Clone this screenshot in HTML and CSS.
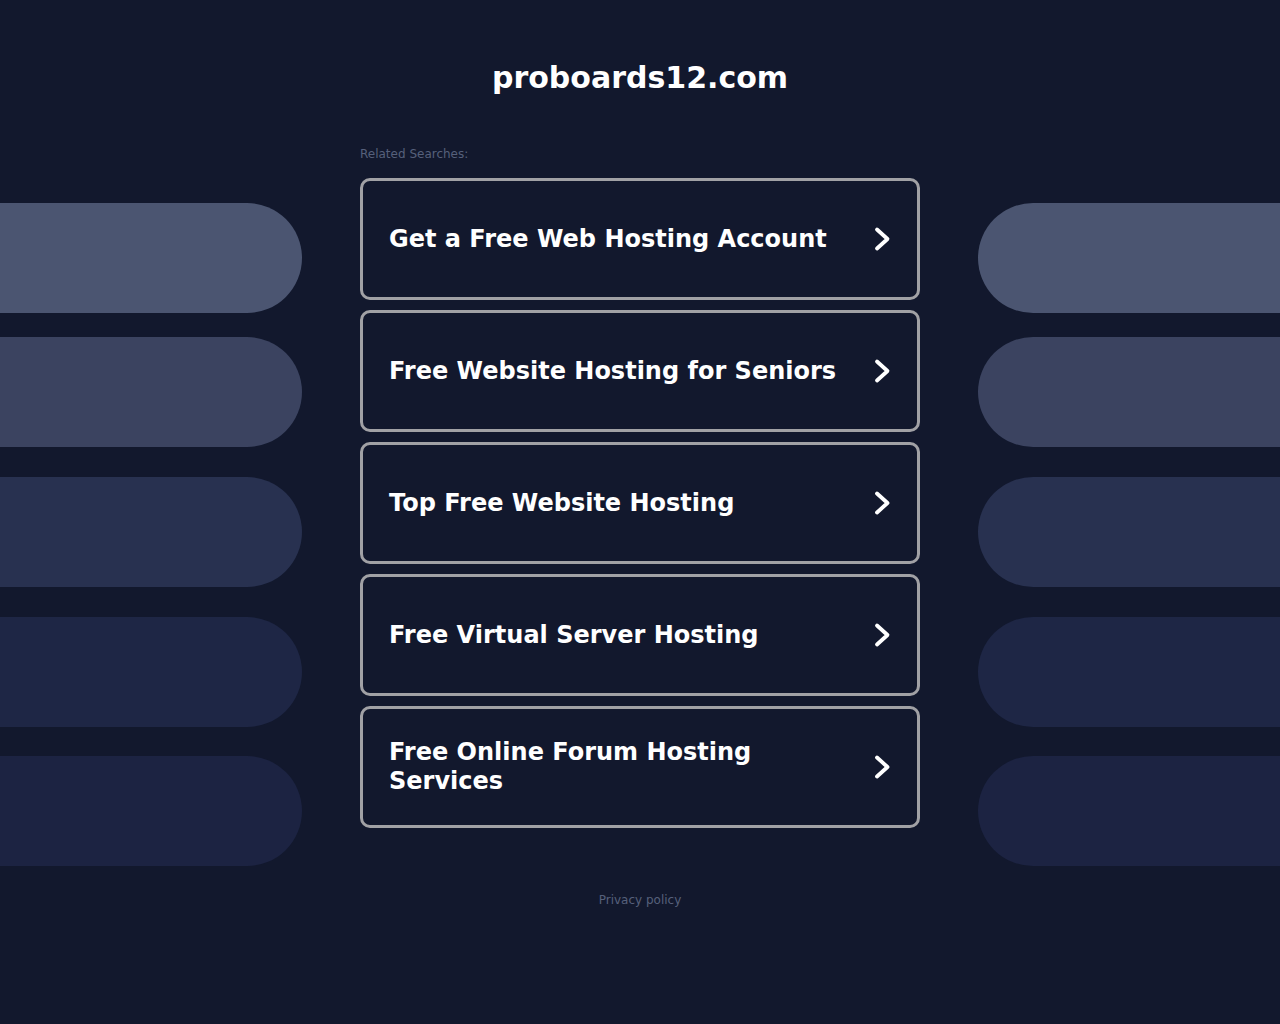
FILE: index.html
```html
<!DOCTYPE html>
<html lang="en">
<head>
    <meta charset="UTF-8">
    <title>proboards12.com</title>
    <link rel="stylesheet" href="styles.css">
</head>
<body>
    <div class="page">
        <div class="side side-left">
            <div class="pill pill-1"></div>
            <div class="pill pill-2"></div>
            <div class="pill pill-3"></div>
            <div class="pill pill-4"></div>
            <div class="pill pill-5"></div>
        </div>
        <div class="main">
            <h1 class="domain">proboards12.com</h1>
            <div class="related-label">Related Searches:</div>
            <div class="links">
                <a class="link-card" href="#"><span>Get a Free Web Hosting Account</span><svg class="chevron" viewBox="0 0 20 26"><path d="M4 3.5 L14.5 13 L4 22.5"/></svg></a>
                <a class="link-card" href="#"><span>Free Website Hosting for Seniors</span><svg class="chevron" viewBox="0 0 20 26"><path d="M4 3.5 L14.5 13 L4 22.5"/></svg></a>
                <a class="link-card" href="#"><span>Top Free Website Hosting</span><svg class="chevron" viewBox="0 0 20 26"><path d="M4 3.5 L14.5 13 L4 22.5"/></svg></a>
                <a class="link-card" href="#"><span>Free Virtual Server Hosting</span><svg class="chevron" viewBox="0 0 20 26"><path d="M4 3.5 L14.5 13 L4 22.5"/></svg></a>
                <a class="link-card" href="#"><span>Free Online Forum Hosting Services</span><svg class="chevron" viewBox="0 0 20 26"><path d="M4 3.5 L14.5 13 L4 22.5"/></svg></a>
            </div>
            <div class="footer"><a href="#">Privacy policy</a></div>
        </div>
        <div class="side side-right">
            <div class="pill pill-1"></div>
            <div class="pill pill-2"></div>
            <div class="pill pill-3"></div>
            <div class="pill pill-4"></div>
            <div class="pill pill-5"></div>
        </div>
    </div>
</body>
</html>
```

FILE: styles.css
```css
body {
    margin: 0;
    padding: 0;
    background-color: #12182d;
    font-family: "DejaVu Sans", sans-serif;
    height: 1024px;
    overflow: hidden;
}
.page {
    display: flex;
}
.side {
    flex: 1;
    display: flex;
    flex-direction: column;
    padding-top: 203px;
}
.pill {
    height: 110px;
    margin-bottom: 30px;
}
.pill-1 { background-color: #4b5571; margin-bottom: 24px; }
.pill-2 { background-color: #3b4360; }
.pill-3 { background-color: #283150; }
.pill-4 { background-color: #1e2645; margin-bottom: 29px; }
.pill-5 { background-color: #1c2342; }
.side-left .pill { border-radius: 0 55px 55px 0; }
.side-right .pill { border-radius: 55px 0 0 55px; }
.main {
    width: 560px;
    margin: 0 58px;
}
.domain {
    margin: 60px 0 0;
    font-size: 30px;
    line-height: 36px;
    text-align: center;
    color: #ffffff;
    font-weight: bold;
}
.related-label {
    margin-top: 50px;
    font-size: 12px;
    line-height: 16px;
    color: #56607b;
}
.links {
    margin-top: 16px;
    display: flex;
    flex-direction: column;
    gap: 10px;
}
.link-card {
    height: 122px;
    box-sizing: border-box;
    border: 3px solid #a1a1a5;
    border-radius: 10px;
    display: flex;
    align-items: center;
    justify-content: space-between;
    padding: 0 24px 0 26px;
    text-decoration: none;
    color: #ffffff;
    font-size: 24px;
    font-weight: bold;
    line-height: 29px;
}
.link-card span {
    max-width: 462px;
}
.chevron {
    width: 20px;
    height: 26px;
    flex-shrink: 0;
    fill: none;
    stroke: #ffffff;
    stroke-width: 3.8;
    stroke-linecap: round;
    stroke-linejoin: round;
}
.footer {
    margin-top: 64px;
    text-align: center;
    font-size: 12px;
    line-height: 16px;
}
.footer a {
    color: #56607b;
    text-decoration: none;
}
```
